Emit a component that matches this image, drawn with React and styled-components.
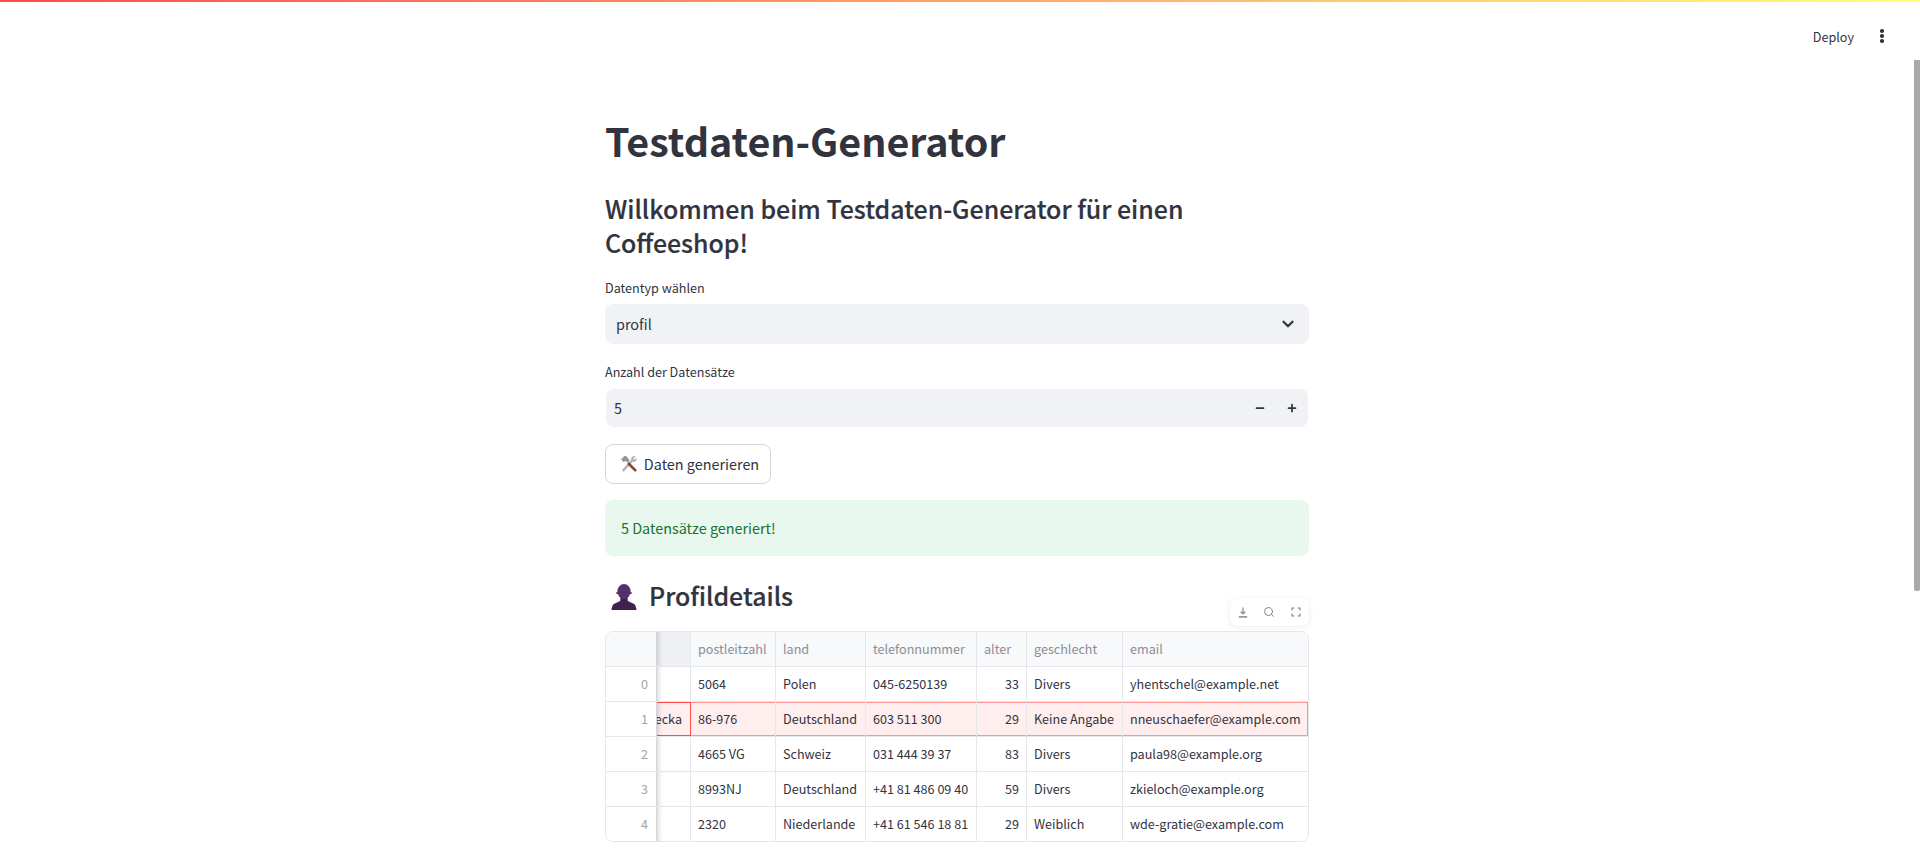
import React from 'react';
import styled, { createGlobalStyle } from 'styled-components';
import { ChevronDown, Search, Minus, Plus } from 'lucide-react';

const GlobalStyle = createGlobalStyle`
  html, body {
    margin: 0;
    padding: 0;
    height: 100%;
    overflow: hidden;
    background: #fff;
  }
  body {
    font-family: 'Noto Sans CJK SC', 'Noto Sans', sans-serif;
    color: #31333f;
  }
  * { box-sizing: border-box; }
`;

const Page = styled.div`
  position: relative;
  height: 859px;
  overflow: hidden;
`;

const Decoration = styled.div`
  height: 2px;
  background: linear-gradient(90deg, #ff4b4b, #fffd80);
`;

const Header = styled.header`
  height: 68px;
  display: flex;
  justify-content: flex-end;
  align-items: center;
  gap: 21px;
  padding: 0 31px 0 0;
`;

const DeployLink = styled.span`
  font-size: 12.6px;
  color: #31333f;
`;

const MenuDots = styled.span`
  display: flex;
  flex-direction: column;
  gap: 1.5px;
  width: 14px;
  align-items: center;
`;

const Dot = styled.i`
  display: block;
  width: 3.5px;
  height: 3.5px;
  border-radius: 50%;
  background: #31333f;
`;

const ScrollThumb = styled.div`
  position: absolute;
  top: 60px;
  right: 0;
  width: 6px;
  height: 531px;
  border-radius: 0 0 2px 2px;
  background: #a8a8ad;
`;

const Main = styled.main`
  width: 704px;
  margin: 0 0 0 605px;
  display: flex;
  flex-direction: column;
`;

const Title = styled.h1`
  margin: 42px 0 0;
  font-size: 39.4px;
  line-height: 56px;
  font-weight: 700;
  color: #31333f;
`;

const Subtitle = styled.h3`
  margin: 24px 0 0;
  font-size: 24.9px;
  line-height: 33.6px;
  font-weight: 500;
  -webkit-text-stroke: 0.2px #31333f;
  color: #31333f;
`;

const FieldLabel = styled.label`
  display: block;
  font-size: 12.6px;
  line-height: 18px;
  margin-top: ${({ $top }) => $top}px;
  margin-bottom: ${({ $bottom }) => $bottom}px;
`;

const SelectBox = styled.div`
  height: 40px;
  border-radius: 8px;
  background: #f0f2f6;
  display: flex;
  align-items: center;
  justify-content: space-between;
  padding: 0 12px 0 11px;
  font-size: 14.4px;
`;

const InputText = styled.span`
  padding-bottom: 2px;
`;

const NumberBox = styled.div`
  height: 38px;
  margin: 0 1px;
  border-radius: 8px;
  background: #f0f2f6;
  display: flex;
  align-items: center;
  padding: 0 0 0 8px;
  font-size: 14.4px;
`;

const NumberValue = styled(InputText)`
  flex: 1;
`;

const StepButton = styled.span`
  width: 32px;
  height: 38px;
  display: flex;
  align-items: center;
  justify-content: center;
`;

const GenerateButton = styled.button`
  align-self: flex-start;
  margin-top: 17px;
  width: 166px;
  height: 40px;
  border: 1px solid #d4d5d9;
  border-radius: 8px;
  background: #fff;
  display: flex;
  align-items: center;
  justify-content: center;
  gap: 6px;
  font-family: inherit;
  font-size: 14.4px;
  color: #31333f;
  padding: 0 0 0 3px;
`;

const SuccessAlert = styled.div`
  margin-top: 16px;
  height: 56px;
  border-radius: 8px;
  background: #e8f8ee;
  color: #177233;
  font-size: 14.4px;
  display: flex;
  align-items: center;
  padding: 0 16px 2px;
`;

const SectionHeading = styled.h3`
  margin: 24px 0 0;
  height: 34px;
  display: flex;
  align-items: center;
  gap: 12px;
  padding-left: 6px;
  font-size: 24.9px;
  font-weight: 500;
  -webkit-text-stroke: 0.2px #31333f;
  line-height: 34px;
`;

const HeadingText = styled.span`
  margin-bottom: 4px;
`;

const TableWrap = styled.div`
  position: relative;
  margin-top: 17px;
`;

const Toolbar = styled.div`
  position: absolute;
  top: -33px;
  right: 0;
  width: 79px;
  height: 28px;
  border-radius: 8px;
  background: #fff;
  box-shadow: 0 1px 6px rgba(0, 0, 0, 0.08);
  display: grid;
  grid-template-columns: repeat(3, 1fr);
  color: #85868d;
`;

const ToolButton = styled.span`
  display: flex;
  align-items: center;
  justify-content: center;
`;

const Grid = styled.div`
  border: 1px solid #e6e7ea;
  border-radius: 8px;
  overflow: hidden;
  font-size: 12.6px;
`;

const Row = styled.div`
  display: grid;
  grid-template-columns: 51px 34px 85px 90px 111px 50px 96px 185px;
  height: ${({ $header }) => ($header ? 34 : 35)}px;
  background: ${({ $header }) => ($header ? '#f8f9fb' : '#fff')};
  border-top: ${({ $header }) => ($header ? 'none' : '1px solid #e6e7ea')};
`;

const Cell = styled.div`
  display: flex;
  align-items: center;
  justify-content: ${({ $right }) => ($right ? 'flex-end' : 'flex-start')};
  padding: 0 7px 2px 7px;
  white-space: nowrap;
  overflow: hidden;
  border-right: ${({ $last }) => ($last ? 'none' : '1px solid #e6e7ea')};
  color: ${({ $muted }) => ($muted ? '#8b8d95' : '#31333f')};
  background: ${({ $selected }) => ($selected ? '#ffeeee' : 'transparent')};
  box-shadow: ${({ $selected, $last }) =>
    $selected
      ? `inset 0 1px 0 #ff9494, inset 0 -1px 0 #ff9494${$last ? ', inset -1px 0 0 #ff9494' : ''}`
      : 'none'};
`;

const IndexCell = styled(Cell)`
  justify-content: flex-end;
  padding-right: 8px;
  color: #a3a4ab;
  border-right: 1px solid #d5d6da;
`;

const FrozenCell = styled(Cell)`
  padding: 0 8px 2px 0;
  justify-content: flex-end;
  border-right: 1px solid ${({ $selected }) => ($selected ? '#ff4b4b' : '#e6e7ea')};
  background: ${({ $header, $selected }) =>
    $header ? '#eff0f3' : $selected ? '#ffeeee' : '#fff'};
  box-shadow: ${({ $selected }) =>
    $selected
      ? 'inset 5px 0 4px -3px rgba(0,0,0,0.14), inset 0 1px 0 #ff4b4b, inset 0 -1px 0 #ff4b4b'
      : 'inset 5px 0 4px -3px rgba(0,0,0,0.14)'};
`;

const rows = [
  ['0', '', '5064', 'Polen', '045-6250139', '33', 'Divers', 'yhentschel@example.net'],
  ['1', 'ecka', '86-976', 'Deutschland', '603 511 300', '29', 'Keine Angabe', 'nneuschaefer@example.com'],
  ['2', '', '4665 VG', 'Schweiz', '031 444 39 37', '83', 'Divers', 'paula98@example.org'],
  ['3', '', '8993NJ', 'Deutschland', '+41 81 486 09 40', '59', 'Divers', 'zkieloch@example.org'],
  ['4', '', '2320', 'Niederlande', '+41 61 546 18 81', '29', 'Weiblich', 'wde-gratie@example.com'],
];

const columns = ['postleitzahl', 'land', 'telefonnummer', 'alter', 'geschlecht', 'email'];

// hammer and wrench emoji
const ToolsIcon = () => (
  <svg width="18" height="18" viewBox="0 0 18 18">
    <path d="M15.6 1.2 L13.4 3.4 L14.6 4.8 L16.8 2.8 C17.4 5.2 15.4 7.4 12.8 6.8 L4.4 16 C3.4 17.2 1.4 15.6 2.4 14.4 L11.2 5.2 C10.6 3 12.8 0.6 15.6 1.2 Z" fill="#b3afb8" />
    <path d="M7 9 L9 7 L16.4 14.4 C17.4 15.6 15.6 17.4 14.4 16.2 Z" fill="#8a4b2f" />
    <path d="M1 4.4 L4.6 0.8 L6.4 1.2 L9.8 5.4 L7.6 7.8 L5.8 6 L3.6 7 Z" fill="#98939e" />
  </svg>
);

// bust in silhouette emoji
const BustIcon = () => (
  <svg width="26" height="26" viewBox="0 0 26 26">
    <path d="M9.5 13 L16.5 13 L16.8 17 L23.2 20 C24.6 21 25.2 24 25.6 26 L0.4 26 C0.8 24 1.4 21 2.8 20 L9.2 17 Z" fill="#3f2150" />
    <ellipse cx="13" cy="7.5" rx="6.6" ry="7.5" fill="#55306b" />
    <circle cx="6.2" cy="9" r="1.1" fill="#55306b" />
    <circle cx="19.8" cy="9" r="1.1" fill="#55306b" />
  </svg>
);

const DownloadIcon = () => (
  <svg width="10" height="11" viewBox="0 0 12 13" fill="none" stroke="currentColor" strokeWidth="1.4">
    <path d="M6 0.5V8M3.2 5.4L6 8.2L8.8 5.4" />
    <path d="M1 11.8H11" strokeWidth="1.8" />
  </svg>
);

const FullscreenIcon = () => (
  <svg width="10" height="10" viewBox="0 0 10 10" fill="none" stroke="currentColor" strokeWidth="1.2">
    <path d="M1 3.4V1h2.4M6.6 1H9v2.4M9 6.6V9H6.6M3.4 9H1V6.6" />
  </svg>
);

const App = () => (
  <Page>
    <GlobalStyle />
    <Decoration />
    <Header>
      <DeployLink>Deploy</DeployLink>
      <MenuDots>
        <Dot />
        <Dot />
        <Dot />
      </MenuDots>
    </Header>
    <ScrollThumb />
    <Main>
      <Title>Testdaten-Generator</Title>
      <Subtitle>Willkommen beim Testdaten-Generator für einen Coffeeshop!</Subtitle>
      <FieldLabel $top={20} $bottom={7}>Datentyp wählen</FieldLabel>
      <SelectBox>
        <InputText>profil</InputText>
        <ChevronDown size={18} strokeWidth={3} />
      </SelectBox>
      <FieldLabel $top={19} $bottom={8}>Anzahl der Datensätze</FieldLabel>
      <NumberBox>
        <NumberValue>5</NumberValue>
        <StepButton>
          <Minus size={12} strokeWidth={3.5} />
        </StepButton>
        <StepButton>
          <Plus size={12} strokeWidth={3.5} />
        </StepButton>
      </NumberBox>
      <GenerateButton>
        <ToolsIcon />
        <InputText>Daten generieren</InputText>
      </GenerateButton>
      <SuccessAlert>5 Datensätze generiert!</SuccessAlert>
      <SectionHeading>
        <BustIcon />
        <HeadingText>Profildetails</HeadingText>
      </SectionHeading>
      <TableWrap>
        <Toolbar>
          <ToolButton>
            <DownloadIcon />
          </ToolButton>
          <ToolButton>
            <Search size={12} />
          </ToolButton>
          <ToolButton>
            <FullscreenIcon />
          </ToolButton>
        </Toolbar>
        <Grid>
          <Row $header>
            <IndexCell />
            <FrozenCell $header />
            {columns.map((name, i) => (
              <Cell key={name} $muted $last={i === columns.length - 1}>
                {name}
              </Cell>
            ))}
          </Row>
          {rows.map((row) => {
            const selected = row[0] === '1';
            return (
              <Row key={row[0]}>
                <IndexCell>{row[0]}</IndexCell>
                <FrozenCell $selected={selected}>{row[1]}</FrozenCell>
                {row.slice(2).map((value, i) => (
                  <Cell key={i} $selected={selected} $right={i === 3} $last={i === 5}>
                    {value}
                  </Cell>
                ))}
              </Row>
            );
          })}
        </Grid>
      </TableWrap>
    </Main>
  </Page>
);

export default App;
